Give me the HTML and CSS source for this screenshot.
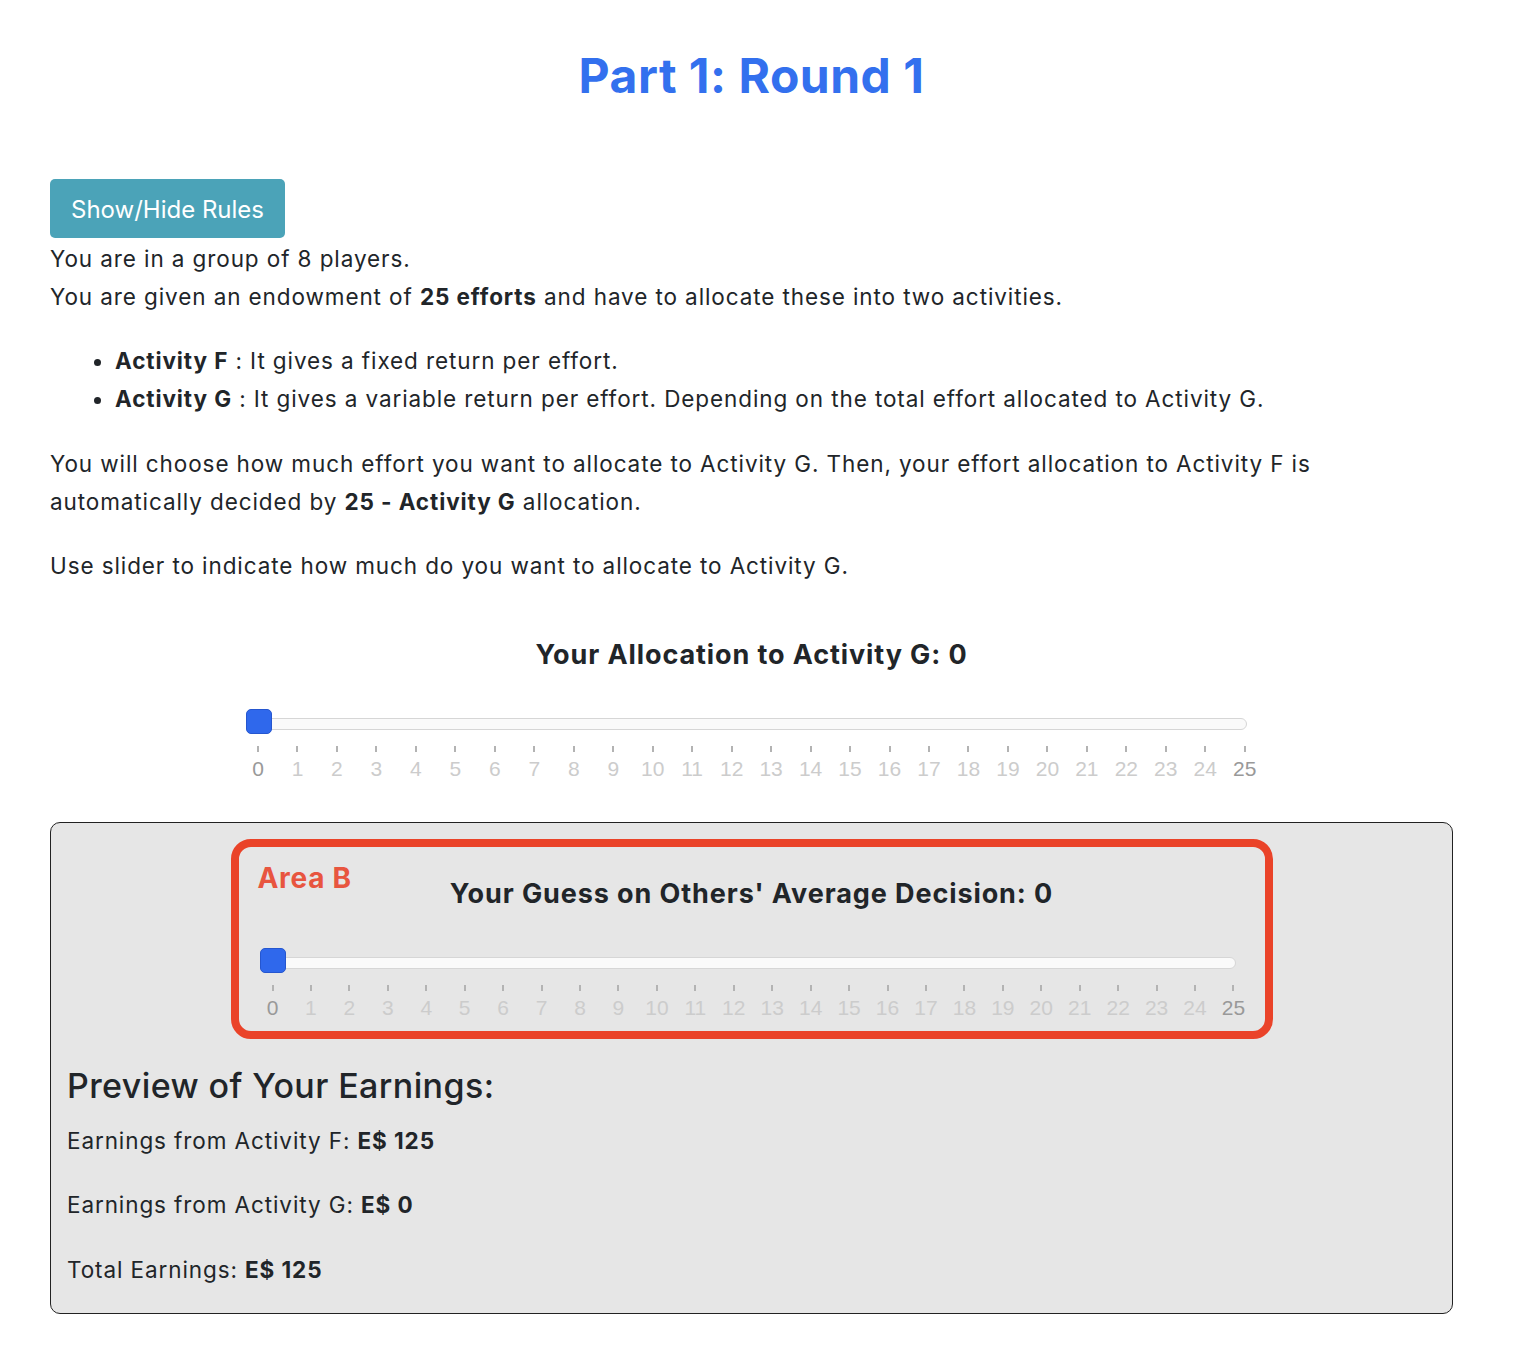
FILE: index.html
```html
<!DOCTYPE html>
<html lang="en">
<head>
<meta charset="utf-8">
<title>Part 1: Round 1</title>
<link rel="stylesheet" href="styles.css">
</head>
<body>
<div class="page">
  <h1 class="title">Part 1: Round 1</h1>
  <button class="btn-rules" type="button">Show/Hide Rules</button>
  <div class="intro">
    <div>You are in a group of 8 players.</div>
    <div>You are given an endowment of <b>25 efforts</b> and have to allocate these into two activities.</div>
  </div>
  <ul class="acts">
    <li><b>Activity F</b> : It gives a fixed return per effort.</li>
    <li><b>Activity G</b> : It gives a variable return per effort. Depending on the total effort allocated to Activity G.</li>
  </ul>
  <p class="para">You will choose how much effort you want to allocate to Activity G. Then, your effort allocation to Activity F is automatically decided by <b>25 - Activity G</b> allocation.</p>
  <p class="para">Use slider to indicate how much do you want to allocate to Activity G.</p>

  <h4 class="slider-title">Your Allocation to Activity G: 0</h4>
  <div class="slider s1">
    <div class="track"><span class="thumb"></span></div>
    <div class="pips">
      <div class="pip edge"><i></i><span>0</span></div>
      <div class="pip"><i></i><span>1</span></div>
      <div class="pip"><i></i><span>2</span></div>
      <div class="pip"><i></i><span>3</span></div>
      <div class="pip"><i></i><span>4</span></div>
      <div class="pip"><i></i><span>5</span></div>
      <div class="pip"><i></i><span>6</span></div>
      <div class="pip"><i></i><span>7</span></div>
      <div class="pip"><i></i><span>8</span></div>
      <div class="pip"><i></i><span>9</span></div>
      <div class="pip"><i></i><span>10</span></div>
      <div class="pip"><i></i><span>11</span></div>
      <div class="pip"><i></i><span>12</span></div>
      <div class="pip"><i></i><span>13</span></div>
      <div class="pip"><i></i><span>14</span></div>
      <div class="pip"><i></i><span>15</span></div>
      <div class="pip"><i></i><span>16</span></div>
      <div class="pip"><i></i><span>17</span></div>
      <div class="pip"><i></i><span>18</span></div>
      <div class="pip"><i></i><span>19</span></div>
      <div class="pip"><i></i><span>20</span></div>
      <div class="pip"><i></i><span>21</span></div>
      <div class="pip"><i></i><span>22</span></div>
      <div class="pip"><i></i><span>23</span></div>
      <div class="pip"><i></i><span>24</span></div>
      <div class="pip edge"><i></i><span>25</span></div>
    </div>
  </div>

  <div class="panel">
    <div class="area-b">
      <span class="area-label">Area B</span>
      <h4 class="slider-title guess">Your Guess on Others' Average Decision: 0</h4>
      <div class="slider s2">
        <div class="track"><span class="thumb"></span></div>
        <div class="pips">
          <div class="pip edge"><i></i><span>0</span></div>
          <div class="pip"><i></i><span>1</span></div>
          <div class="pip"><i></i><span>2</span></div>
          <div class="pip"><i></i><span>3</span></div>
          <div class="pip"><i></i><span>4</span></div>
          <div class="pip"><i></i><span>5</span></div>
          <div class="pip"><i></i><span>6</span></div>
          <div class="pip"><i></i><span>7</span></div>
          <div class="pip"><i></i><span>8</span></div>
          <div class="pip"><i></i><span>9</span></div>
          <div class="pip"><i></i><span>10</span></div>
          <div class="pip"><i></i><span>11</span></div>
          <div class="pip"><i></i><span>12</span></div>
          <div class="pip"><i></i><span>13</span></div>
          <div class="pip"><i></i><span>14</span></div>
          <div class="pip"><i></i><span>15</span></div>
          <div class="pip"><i></i><span>16</span></div>
          <div class="pip"><i></i><span>17</span></div>
          <div class="pip"><i></i><span>18</span></div>
          <div class="pip"><i></i><span>19</span></div>
          <div class="pip"><i></i><span>20</span></div>
          <div class="pip"><i></i><span>21</span></div>
          <div class="pip"><i></i><span>22</span></div>
          <div class="pip"><i></i><span>23</span></div>
          <div class="pip"><i></i><span>24</span></div>
          <div class="pip edge"><i></i><span>25</span></div>
        </div>
      </div>
    </div>

    <h3 class="preview-title">Preview of Your Earnings:</h3>
    <p class="earn">Earnings from Activity F: <b>E$ 125</b></p>
    <p class="earn">Earnings from Activity G: <b>E$ 0</b></p>
    <p class="earn last">Total Earnings: <b>E$ 125</b></p>
  </div>
</div>
</body>
</html>
```

FILE: styles.css
```css
* { box-sizing: border-box; }

html, body {
  margin: 0;
  padding: 0;
  background: #ffffff;
}

body {
  font-family: Inter, "Noto Sans", "Liberation Sans", sans-serif;
  font-size: 22.5px;
  line-height: 38.4px;
  letter-spacing: 0.9px;
  color: #212529;
}

b { font-weight: 700; }

.page {
  padding: 0 65px 60px 50px;
}

.title {
  margin: 47px 0 0;
  font-size: 48px;
  line-height: 58px;
  font-weight: 700;
  text-align: center;
  color: #3370ee;
  letter-spacing: 0.5px;
}

.btn-rules {
  display: block;
  margin: 74px 0 0;
  width: 235px;
  height: 59px;
  padding: 3px 0 0;
  border: 0;
  border-radius: 5px;
  background: #4ba3b8;
  color: #ffffff;
  font-family: Inter, "Noto Sans", "Liberation Sans", sans-serif;
  font-size: 24px;
  line-height: 56px;
  letter-spacing: 0;
  text-align: center;
  cursor: pointer;
}

.intro {
  margin-top: 2px;
}

.acts {
  margin: 25px 0 26px;
  padding-left: 65px;
}

.para {
  margin: 0 0 26px;
}

.slider-title {
  margin: 51px 0 0;
  font-size: 27px;
  line-height: 36px;
  font-weight: 700;
  letter-spacing: 0.9px;
  text-align: center;
}

.slider {
  position: relative;
}

.track {
  position: relative;
  height: 12px;
  border: 1px solid #d6d6d6;
  border-radius: 6px;
  background: #fafafa;
}

.thumb {
  position: absolute;
  left: -2px;
  top: -10px;
  width: 26px;
  height: 25px;
  border: 1px solid #2556cf;
  border-radius: 5px;
  background: #2f68ec;
}

.pips {
  display: flex;
  justify-content: space-between;
  margin-top: 16px;
}

.pip {
  width: 0;
  display: flex;
  flex-direction: column;
  align-items: center;
}

.pip i {
  display: block;
  width: 2px;
  height: 6px;
  background: #b3b3b3;
  flex: none;
}

.pip span {
  display: block;
  margin-top: 5px;
  font-family: "Liberation Sans", Arial, sans-serif;
  font-size: 21px;
  line-height: 24px;
  letter-spacing: 0;
  color: #cccccc;
  white-space: nowrap;
}

.pip.edge span { color: #999999; }

.s1 {
  margin: 45px 0 0 197px;
  width: 1000px;
}

.s1 .pips {
  margin-left: 11px;
  width: 987px;
}

.panel {
  margin-top: 41px;
  padding: 16px 16px 24px;
  border: 1px solid #222222;
  border-radius: 10px;
  background: #e6e6e6;
}

.area-b {
  position: relative;
  width: 1042px;
  margin: 0 auto;
  padding: 29px 0 11px;
  border: 8px solid #ea4329;
  border-radius: 20px;
}

.area-label {
  position: absolute;
  left: 19px;
  top: 14px;
  font-size: 28px;
  line-height: 34px;
  font-weight: 700;
  letter-spacing: 0.7px;
  color: #e8553f;
}

.slider-title.guess {
  margin: 0;
}

.s2 {
  margin: 45px 0 0 22px;
  width: 975px;
}

.s2 .pips {
  margin-left: 12px;
  width: 961px;
}

.preview-title {
  margin: 25px 0 0;
  font-size: 34px;
  line-height: 44px;
  font-weight: 500;
  letter-spacing: 0.4px;
}

.earn {
  margin: 14px 0 0;
}

.earn + .earn {
  margin-top: 26px;
}
```
